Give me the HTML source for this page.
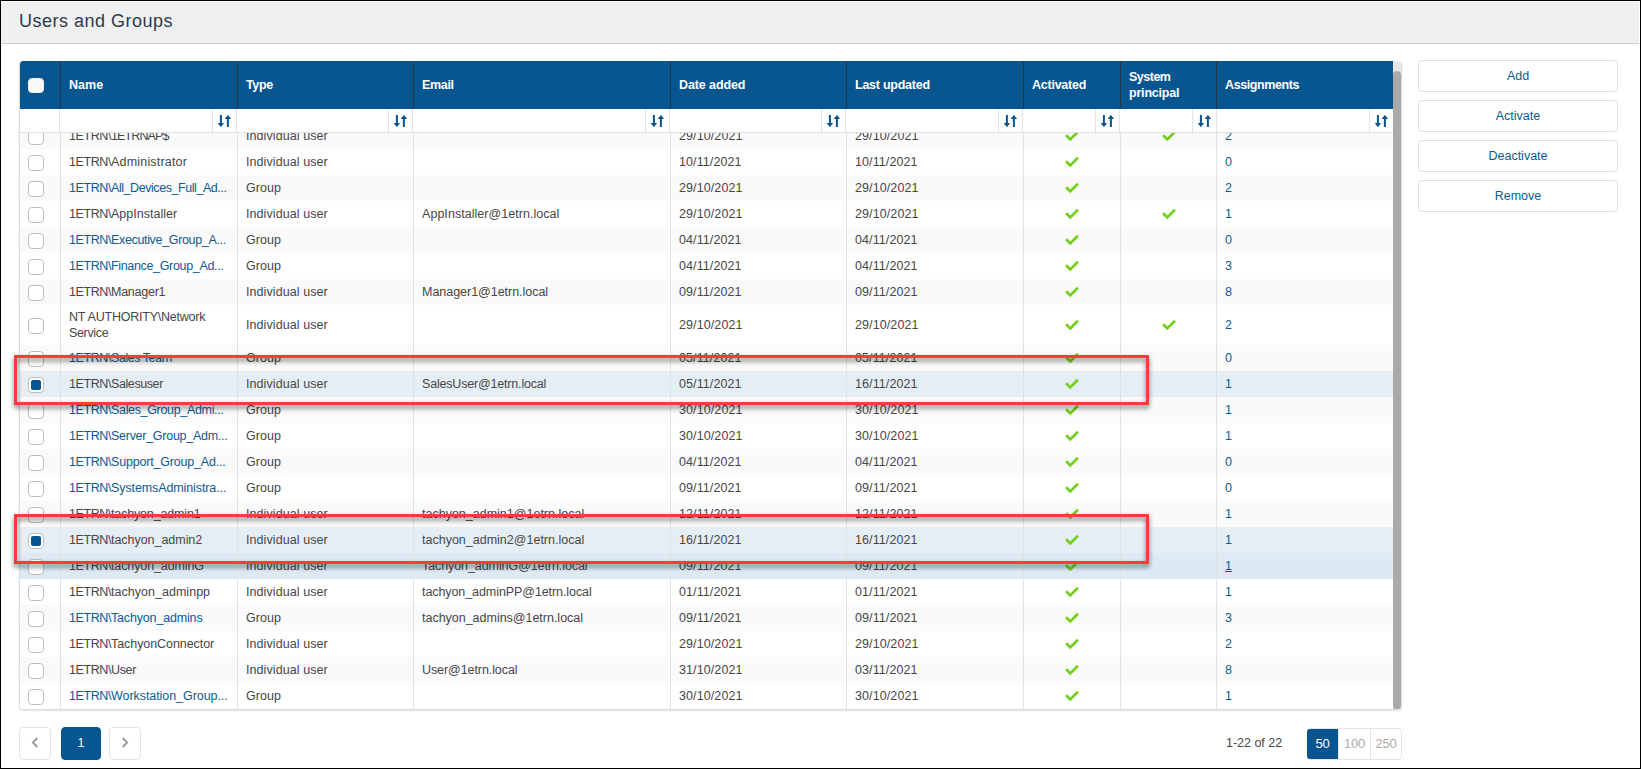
<!DOCTYPE html>
<html lang="en"><head><meta charset="utf-8"><title>Users and Groups</title>
<style>
*{box-sizing:border-box;margin:0;padding:0}
html,body{width:1641px;height:769px;overflow:hidden;background:#fff}
body{font-family:"Liberation Sans",Arial,sans-serif;font-size:12.5px;color:#464646}
.frame{position:absolute;left:0;top:0;width:1641px;height:769px;overflow:hidden;background:#fff}
.edge{left:0;top:0;width:1641px;height:769px;border:1px solid #000;z-index:9}
.frame>*{position:absolute}
.topbar{left:0;top:1px;width:1639px;height:43px;background:#f0f0f0;border-top:1px solid #fcfcfc;border-bottom:1px solid #cfcfcf}
.topbar h1{position:absolute;left:19px;top:8px;font-size:18px;font-weight:normal;color:#2b3b4e;line-height:22px;letter-spacing:.5px}
.grid{left:19px;top:61px;width:1383px;height:649px;border:1px solid #ddd;border-top:0;border-radius:4px;overflow:hidden;box-shadow:0 1px 2px rgba(0,0,0,.12)}
.grid>*{position:absolute}
.hdr{left:0;top:0;width:1373px;height:48px;background:#07568f;color:#fff;font-weight:bold}
.c{position:absolute;top:0;height:100%}
.c0{left:0;width:40px}
.c1{left:40px;width:177px}
.c2{left:217px;width:176px}
.c3{left:393px;width:257px}
.c4{left:650px;width:176px}
.c5{left:826px;width:177px}
.c6{left:1003px;width:97px}
.c7{left:1100px;width:97px}
.c8{left:1196px;width:177px}
.flt .c8{left:1197px;width:176px}
.hdr .c{border-left:1px solid #253746;display:flex;align-items:center;padding-left:8px;line-height:16px;font-size:12.5px}
.hdr .c0{border-left:0;padding:0}
.flt{left:-1px;top:48px;width:1374px;height:24px;background:#fff;border-bottom:1px solid #e2e2e2}
.flt .c{border-left:1px solid #e2e2e2}
.flt .c0{border-left:0}
.sb{position:absolute;right:0;top:0;width:24px;height:23px;border-left:1px solid #e2e2e2}
.c8 .sb{right:-1px}
.so{position:absolute;left:4.6px;top:6px;overflow:visible}
.body{left:0;top:72px;width:1373px;height:576px;overflow:hidden}
.rows{position:absolute;left:0;top:-10px;width:1373px}
.row{position:relative;height:26px;width:1373px;background:#fff}
.row.odd{background:#fafafa}
.row.tall{height:40px}
.row.sel{background:#e6eef5}
.row.hov{background:#dde9f3}
.row .c{border-left:1px solid #e2e2e2;white-space:nowrap;overflow:hidden}
.row .c0{border-left:0}
.t{position:absolute;left:8px;top:5px;line-height:16.5px;letter-spacing:0}
.tall .t{top:4px}
.tall .c1 .t{line-height:16px;top:4px}
.c1 .t,.c3 .t,.c4 .t,.c5 .t,.c8 .t{left:8px}
.c4 .t,.c5 .t{letter-spacing:.1px}
.c2 .t{letter-spacing:.08px}
.tall .c2 .t,.tall .c4 .t,.tall .c5 .t,.tall .c8 .t{top:12px}
a{color:#0f5a91;text-decoration:none}
.hov .c8 a{text-decoration:underline}
.cb{position:absolute;left:8px;top:6px;width:16px;height:16px;border:1px solid #bdbdbd;border-radius:4px;background:#fff}
.tall .cb{top:13px}
.hcb{top:17px;height:15px;border-color:#f3efe9;background:#fafafa}
.cb.on i{position:absolute;left:2px;top:2px;width:10px;height:10px;border-radius:2px;background:#07568f}
.ck{position:absolute;left:41px;top:7px}
.tall .ck{top:14px}
.sbar{left:1373px;top:0;width:8px;height:649px;background:#e7e7e7}
.thumb{position:absolute;left:0;top:10px;width:8px;height:639px;background:#aaa;border-radius:4px}
.btns{left:1418px;top:60px;width:200px}
.btn{width:200px;height:32px;margin-bottom:8px;border:1px solid #e0e0e0;border-radius:4px;text-align:center;line-height:30px;color:#0f5a91;background:#fff}
.pg{top:727px;height:33px;padding-bottom:2px;border:1px solid #e3e3e3;border-radius:4px;background:#fff;display:flex;align-items:center;justify-content:center}
.pprev{left:19px;width:32px}
.pcur{left:61px;width:40px;background:#07568f;border-color:#07568f;color:#fff}
.pnext{left:109px;width:32px}
.cnt{left:1226px;top:735px;line-height:16px;letter-spacing:-.02px}
.psz{left:1307px;top:728px;width:95px;height:32px;border:1px solid #e3e3e3;border-radius:4px;display:flex;font-size:13px;letter-spacing:-.3px}
.psz .p{width:32px;text-align:center;line-height:29px;color:#aaa;border-left:1px solid #e3e3e3}
.psz .p:last-child{width:31px}
.psz .p.on{width:31px;margin-left:-1px;background:#07568f;color:#fff;border-left:0;border-radius:3px 0 0 3px}
.redbox{left:14px;width:1135px;height:50px;border:3px solid #fc3a3a;filter:drop-shadow(0 3px 2.5px rgba(0,0,0,.55))}
.rb1{top:355px}
.rb2{top:514px}

</style></head><body>
<div class="frame">
<div class="topbar"><h1>Users and Groups</h1></div>
<div class="grid">
<div class="hdr"><div class="c c0"><span class="cb hcb"></span></div><div class="c c1"><span><span style="letter-spacing:0.038px">Name</span></span></div><div class="c c2"><span><span style="letter-spacing:-0.362px">Type</span></span></div><div class="c c3"><span><span style="letter-spacing:-0.332px">Email</span></span></div><div class="c c4"><span><span style="letter-spacing:-0.099px">Date added</span></span></div><div class="c c5"><span><span style="letter-spacing:-0.250px">Last updated</span></span></div><div class="c c6"><span><span style="letter-spacing:-0.242px">Activated</span></span></div><div class="c c7"><span><span style="letter-spacing:-0.497px">System</span><br><span style="letter-spacing:-0.199px">principal</span></span></div><div class="c c8"><span><span style="letter-spacing:-0.400px">Assignments</span></span></div></div>
<div class="flt"><div class="c c0"></div><div class="c c1"><div class="sb"><svg class="so" width="13" height="12" viewBox="0 0 13 12"><path d="M1.9 0H3.9V7.9H5.6Q6.1 7.9 5.8 8.4L3.2 11.8Q2.9 12.2 2.6 11.8L0 8.4Q-0.3 7.9 0.2 7.9H1.9Z M8.9 12H10.9V4.1H12.6Q13.1 4.1 12.8 3.6L10.2 0.2Q9.9 -0.2 9.6 0.2L7 3.6Q6.7 4.1 7.2 4.1H8.9Z" fill="#07568f"/></svg></div></div><div class="c c2"><div class="sb"><svg class="so" width="13" height="12" viewBox="0 0 13 12"><path d="M1.9 0H3.9V7.9H5.6Q6.1 7.9 5.8 8.4L3.2 11.8Q2.9 12.2 2.6 11.8L0 8.4Q-0.3 7.9 0.2 7.9H1.9Z M8.9 12H10.9V4.1H12.6Q13.1 4.1 12.8 3.6L10.2 0.2Q9.9 -0.2 9.6 0.2L7 3.6Q6.7 4.1 7.2 4.1H8.9Z" fill="#07568f"/></svg></div></div><div class="c c3"><div class="sb"><svg class="so" width="13" height="12" viewBox="0 0 13 12"><path d="M1.9 0H3.9V7.9H5.6Q6.1 7.9 5.8 8.4L3.2 11.8Q2.9 12.2 2.6 11.8L0 8.4Q-0.3 7.9 0.2 7.9H1.9Z M8.9 12H10.9V4.1H12.6Q13.1 4.1 12.8 3.6L10.2 0.2Q9.9 -0.2 9.6 0.2L7 3.6Q6.7 4.1 7.2 4.1H8.9Z" fill="#07568f"/></svg></div></div><div class="c c4"><div class="sb"><svg class="so" width="13" height="12" viewBox="0 0 13 12"><path d="M1.9 0H3.9V7.9H5.6Q6.1 7.9 5.8 8.4L3.2 11.8Q2.9 12.2 2.6 11.8L0 8.4Q-0.3 7.9 0.2 7.9H1.9Z M8.9 12H10.9V4.1H12.6Q13.1 4.1 12.8 3.6L10.2 0.2Q9.9 -0.2 9.6 0.2L7 3.6Q6.7 4.1 7.2 4.1H8.9Z" fill="#07568f"/></svg></div></div><div class="c c5"><div class="sb"><svg class="so" width="13" height="12" viewBox="0 0 13 12"><path d="M1.9 0H3.9V7.9H5.6Q6.1 7.9 5.8 8.4L3.2 11.8Q2.9 12.2 2.6 11.8L0 8.4Q-0.3 7.9 0.2 7.9H1.9Z M8.9 12H10.9V4.1H12.6Q13.1 4.1 12.8 3.6L10.2 0.2Q9.9 -0.2 9.6 0.2L7 3.6Q6.7 4.1 7.2 4.1H8.9Z" fill="#07568f"/></svg></div></div><div class="c c6"><div class="sb"><svg class="so" width="13" height="12" viewBox="0 0 13 12"><path d="M1.9 0H3.9V7.9H5.6Q6.1 7.9 5.8 8.4L3.2 11.8Q2.9 12.2 2.6 11.8L0 8.4Q-0.3 7.9 0.2 7.9H1.9Z M8.9 12H10.9V4.1H12.6Q13.1 4.1 12.8 3.6L10.2 0.2Q9.9 -0.2 9.6 0.2L7 3.6Q6.7 4.1 7.2 4.1H8.9Z" fill="#07568f"/></svg></div></div><div class="c c7"><div class="sb"><svg class="so" width="13" height="12" viewBox="0 0 13 12"><path d="M1.9 0H3.9V7.9H5.6Q6.1 7.9 5.8 8.4L3.2 11.8Q2.9 12.2 2.6 11.8L0 8.4Q-0.3 7.9 0.2 7.9H1.9Z M8.9 12H10.9V4.1H12.6Q13.1 4.1 12.8 3.6L10.2 0.2Q9.9 -0.2 9.6 0.2L7 3.6Q6.7 4.1 7.2 4.1H8.9Z" fill="#07568f"/></svg></div></div><div class="c c8"><div class="sb"><svg class="so" width="13" height="12" viewBox="0 0 13 12"><path d="M1.9 0H3.9V7.9H5.6Q6.1 7.9 5.8 8.4L3.2 11.8Q2.9 12.2 2.6 11.8L0 8.4Q-0.3 7.9 0.2 7.9H1.9Z M8.9 12H10.9V4.1H12.6Q13.1 4.1 12.8 3.6L10.2 0.2Q9.9 -0.2 9.6 0.2L7 3.6Q6.7 4.1 7.2 4.1H8.9Z" fill="#07568f"/></svg></div></div></div>
<div class="body"><div class="rows">
<div class="row odd"><div class="c c0"><span class="cb"></span></div><div class="c c1"><span class="t"><span style="letter-spacing:-0.409px">1ETRN\</span><span style="letter-spacing:-0.889px">1ETRNAP$</span></span></div><div class="c c2"><span class="t">Individual user</span></div><div class="c c3"><span class="t"></span></div><div class="c c4"><span class="t">29/10/2021</span></div><div class="c c5"><span class="t">29/10/2021</span></div><div class="c c6"><svg class="ck" width="16" height="13" viewBox="0 0 16 13"><path d="M1.1 5.2 L5.3 9.4 L12.9 1.8" fill="none" stroke="#72cf1a" stroke-width="2.7"/></svg></div><div class="c c7"><svg class="ck" width="16" height="13" viewBox="0 0 16 13"><path d="M1.1 5.2 L5.3 9.4 L12.9 1.8" fill="none" stroke="#72cf1a" stroke-width="2.7"/></svg></div><div class="c c8"><span class="t"><a>2</a></span></div></div>
<div class="row even"><div class="c c0"><span class="cb"></span></div><div class="c c1"><span class="t"><span style="letter-spacing:-0.409px">1ETRN\</span><span style="letter-spacing:0.189px">Administrator</span></span></div><div class="c c2"><span class="t">Individual user</span></div><div class="c c3"><span class="t"></span></div><div class="c c4"><span class="t">10/11/2021</span></div><div class="c c5"><span class="t">10/11/2021</span></div><div class="c c6"><svg class="ck" width="16" height="13" viewBox="0 0 16 13"><path d="M1.1 5.2 L5.3 9.4 L12.9 1.8" fill="none" stroke="#72cf1a" stroke-width="2.7"/></svg></div><div class="c c7"></div><div class="c c8"><span class="t"><a>0</a></span></div></div>
<div class="row odd"><div class="c c0"><span class="cb"></span></div><div class="c c1"><span class="t"><a><span style="letter-spacing:-0.409px">1ETRN\</span><span style="letter-spacing:-0.435px">All_Devices_Full_Ad...</span></a></span></div><div class="c c2"><span class="t">Group</span></div><div class="c c3"><span class="t"></span></div><div class="c c4"><span class="t">29/10/2021</span></div><div class="c c5"><span class="t">29/10/2021</span></div><div class="c c6"><svg class="ck" width="16" height="13" viewBox="0 0 16 13"><path d="M1.1 5.2 L5.3 9.4 L12.9 1.8" fill="none" stroke="#72cf1a" stroke-width="2.7"/></svg></div><div class="c c7"></div><div class="c c8"><span class="t"><a>2</a></span></div></div>
<div class="row even"><div class="c c0"><span class="cb"></span></div><div class="c c1"><span class="t"><span style="letter-spacing:-0.409px">1ETRN\</span><span style="letter-spacing:0.007px">AppInstaller</span></span></div><div class="c c2"><span class="t">Individual user</span></div><div class="c c3"><span class="t"><span style="letter-spacing:0.043px">AppInstaller@1etrn.local</span></span></div><div class="c c4"><span class="t">29/10/2021</span></div><div class="c c5"><span class="t">29/10/2021</span></div><div class="c c6"><svg class="ck" width="16" height="13" viewBox="0 0 16 13"><path d="M1.1 5.2 L5.3 9.4 L12.9 1.8" fill="none" stroke="#72cf1a" stroke-width="2.7"/></svg></div><div class="c c7"><svg class="ck" width="16" height="13" viewBox="0 0 16 13"><path d="M1.1 5.2 L5.3 9.4 L12.9 1.8" fill="none" stroke="#72cf1a" stroke-width="2.7"/></svg></div><div class="c c8"><span class="t"><a>1</a></span></div></div>
<div class="row odd"><div class="c c0"><span class="cb"></span></div><div class="c c1"><span class="t"><a><span style="letter-spacing:-0.409px">1ETRN\</span><span style="letter-spacing:-0.340px">Executive_Group_A...</span></a></span></div><div class="c c2"><span class="t">Group</span></div><div class="c c3"><span class="t"></span></div><div class="c c4"><span class="t">04/11/2021</span></div><div class="c c5"><span class="t">04/11/2021</span></div><div class="c c6"><svg class="ck" width="16" height="13" viewBox="0 0 16 13"><path d="M1.1 5.2 L5.3 9.4 L12.9 1.8" fill="none" stroke="#72cf1a" stroke-width="2.7"/></svg></div><div class="c c7"></div><div class="c c8"><span class="t"><a>0</a></span></div></div>
<div class="row even"><div class="c c0"><span class="cb"></span></div><div class="c c1"><span class="t"><a><span style="letter-spacing:-0.409px">1ETRN\</span><span style="letter-spacing:-0.338px">Finance_Group_Ad...</span></a></span></div><div class="c c2"><span class="t">Group</span></div><div class="c c3"><span class="t"></span></div><div class="c c4"><span class="t">04/11/2021</span></div><div class="c c5"><span class="t">04/11/2021</span></div><div class="c c6"><svg class="ck" width="16" height="13" viewBox="0 0 16 13"><path d="M1.1 5.2 L5.3 9.4 L12.9 1.8" fill="none" stroke="#72cf1a" stroke-width="2.7"/></svg></div><div class="c c7"></div><div class="c c8"><span class="t"><a>3</a></span></div></div>
<div class="row odd"><div class="c c0"><span class="cb"></span></div><div class="c c1"><span class="t"><span style="letter-spacing:-0.409px">1ETRN\</span><span style="letter-spacing:-0.250px">Manager1</span></span></div><div class="c c2"><span class="t">Individual user</span></div><div class="c c3"><span class="t"><span style="letter-spacing:-0.028px">Manager1@1etrn.local</span></span></div><div class="c c4"><span class="t">09/11/2021</span></div><div class="c c5"><span class="t">09/11/2021</span></div><div class="c c6"><svg class="ck" width="16" height="13" viewBox="0 0 16 13"><path d="M1.1 5.2 L5.3 9.4 L12.9 1.8" fill="none" stroke="#72cf1a" stroke-width="2.7"/></svg></div><div class="c c7"></div><div class="c c8"><span class="t"><a>8</a></span></div></div>
<div class="row even tall"><div class="c c0"><span class="cb"></span></div><div class="c c1"><span class="t"><span style="letter-spacing:-0.223px">NT AUTHORITY\Network</span><br><span style="letter-spacing:-0.341px">Service</span></span></div><div class="c c2"><span class="t">Individual user</span></div><div class="c c3"><span class="t"></span></div><div class="c c4"><span class="t">29/10/2021</span></div><div class="c c5"><span class="t">29/10/2021</span></div><div class="c c6"><svg class="ck" width="16" height="13" viewBox="0 0 16 13"><path d="M1.1 5.2 L5.3 9.4 L12.9 1.8" fill="none" stroke="#72cf1a" stroke-width="2.7"/></svg></div><div class="c c7"><svg class="ck" width="16" height="13" viewBox="0 0 16 13"><path d="M1.1 5.2 L5.3 9.4 L12.9 1.8" fill="none" stroke="#72cf1a" stroke-width="2.7"/></svg></div><div class="c c8"><span class="t"><a>2</a></span></div></div>
<div class="row odd"><div class="c c0"><span class="cb"></span></div><div class="c c1"><span class="t"><a><span style="letter-spacing:-0.409px">1ETRN\</span><span style="letter-spacing:-0.449px">Sales Team</span></a></span></div><div class="c c2"><span class="t">Group</span></div><div class="c c3"><span class="t"></span></div><div class="c c4"><span class="t">05/11/2021</span></div><div class="c c5"><span class="t">05/11/2021</span></div><div class="c c6"><svg class="ck" width="16" height="13" viewBox="0 0 16 13"><path d="M1.1 5.2 L5.3 9.4 L12.9 1.8" fill="none" stroke="#72cf1a" stroke-width="2.7"/></svg></div><div class="c c7"></div><div class="c c8"><span class="t"><a>0</a></span></div></div>
<div class="row even sel"><div class="c c0"><span class="cb on"><i></i></span></div><div class="c c1"><span class="t"><span style="letter-spacing:-0.409px">1ETRN\</span><span style="letter-spacing:-0.410px">Salesuser</span></span></div><div class="c c2"><span class="t">Individual user</span></div><div class="c c3"><span class="t"><span style="letter-spacing:-0.182px">SalesUser@1etrn.local</span></span></div><div class="c c4"><span class="t">05/11/2021</span></div><div class="c c5"><span class="t">16/11/2021</span></div><div class="c c6"><svg class="ck" width="16" height="13" viewBox="0 0 16 13"><path d="M1.1 5.2 L5.3 9.4 L12.9 1.8" fill="none" stroke="#72cf1a" stroke-width="2.7"/></svg></div><div class="c c7"></div><div class="c c8"><span class="t"><a>1</a></span></div></div>
<div class="row odd"><div class="c c0"><span class="cb"></span></div><div class="c c1"><span class="t"><a><span style="letter-spacing:-0.409px">1ETRN\</span><span style="letter-spacing:-0.332px">Sales_Group_Admi...</span></a></span></div><div class="c c2"><span class="t">Group</span></div><div class="c c3"><span class="t"></span></div><div class="c c4"><span class="t">30/10/2021</span></div><div class="c c5"><span class="t">30/10/2021</span></div><div class="c c6"><svg class="ck" width="16" height="13" viewBox="0 0 16 13"><path d="M1.1 5.2 L5.3 9.4 L12.9 1.8" fill="none" stroke="#72cf1a" stroke-width="2.7"/></svg></div><div class="c c7"></div><div class="c c8"><span class="t"><a>1</a></span></div></div>
<div class="row even"><div class="c c0"><span class="cb"></span></div><div class="c c1"><span class="t"><a><span style="letter-spacing:-0.409px">1ETRN\</span><span style="letter-spacing:-0.273px">Server_Group_Adm...</span></a></span></div><div class="c c2"><span class="t">Group</span></div><div class="c c3"><span class="t"></span></div><div class="c c4"><span class="t">30/10/2021</span></div><div class="c c5"><span class="t">30/10/2021</span></div><div class="c c6"><svg class="ck" width="16" height="13" viewBox="0 0 16 13"><path d="M1.1 5.2 L5.3 9.4 L12.9 1.8" fill="none" stroke="#72cf1a" stroke-width="2.7"/></svg></div><div class="c c7"></div><div class="c c8"><span class="t"><a>1</a></span></div></div>
<div class="row odd"><div class="c c0"><span class="cb"></span></div><div class="c c1"><span class="t"><a><span style="letter-spacing:-0.409px">1ETRN\</span><span style="letter-spacing:-0.186px">Support_Group_Ad...</span></a></span></div><div class="c c2"><span class="t">Group</span></div><div class="c c3"><span class="t"></span></div><div class="c c4"><span class="t">04/11/2021</span></div><div class="c c5"><span class="t">04/11/2021</span></div><div class="c c6"><svg class="ck" width="16" height="13" viewBox="0 0 16 13"><path d="M1.1 5.2 L5.3 9.4 L12.9 1.8" fill="none" stroke="#72cf1a" stroke-width="2.7"/></svg></div><div class="c c7"></div><div class="c c8"><span class="t"><a>0</a></span></div></div>
<div class="row even"><div class="c c0"><span class="cb"></span></div><div class="c c1"><span class="t"><a><span style="letter-spacing:-0.409px">1ETRN\</span><span style="letter-spacing:-0.105px">SystemsAdministra...</span></a></span></div><div class="c c2"><span class="t">Group</span></div><div class="c c3"><span class="t"></span></div><div class="c c4"><span class="t">09/11/2021</span></div><div class="c c5"><span class="t">09/11/2021</span></div><div class="c c6"><svg class="ck" width="16" height="13" viewBox="0 0 16 13"><path d="M1.1 5.2 L5.3 9.4 L12.9 1.8" fill="none" stroke="#72cf1a" stroke-width="2.7"/></svg></div><div class="c c7"></div><div class="c c8"><span class="t"><a>0</a></span></div></div>
<div class="row odd"><div class="c c0"><span class="cb"></span></div><div class="c c1"><span class="t"><span style="letter-spacing:-0.409px">1ETRN\</span><span style="letter-spacing:-0.160px">tachyon_admin1</span></span></div><div class="c c2"><span class="t">Individual user</span></div><div class="c c3"><span class="t"><span style="letter-spacing:0.004px">tachyon_admin1@1etrn.local</span></span></div><div class="c c4"><span class="t">12/11/2021</span></div><div class="c c5"><span class="t">12/11/2021</span></div><div class="c c6"><svg class="ck" width="16" height="13" viewBox="0 0 16 13"><path d="M1.1 5.2 L5.3 9.4 L12.9 1.8" fill="none" stroke="#72cf1a" stroke-width="2.7"/></svg></div><div class="c c7"></div><div class="c c8"><span class="t"><a>1</a></span></div></div>
<div class="row even sel"><div class="c c0"><span class="cb on"><i></i></span></div><div class="c c1"><span class="t"><span style="letter-spacing:-0.409px">1ETRN\</span><span style="letter-spacing:-0.038px">tachyon_admin2</span></span></div><div class="c c2"><span class="t">Individual user</span></div><div class="c c3"><span class="t"><span style="letter-spacing:0.004px">tachyon_admin2@1etrn.local</span></span></div><div class="c c4"><span class="t">16/11/2021</span></div><div class="c c5"><span class="t">16/11/2021</span></div><div class="c c6"><svg class="ck" width="16" height="13" viewBox="0 0 16 13"><path d="M1.1 5.2 L5.3 9.4 L12.9 1.8" fill="none" stroke="#72cf1a" stroke-width="2.7"/></svg></div><div class="c c7"></div><div class="c c8"><span class="t"><a>1</a></span></div></div>
<div class="row odd hov"><div class="c c0"><span class="cb"></span></div><div class="c c1"><span class="t"><span style="letter-spacing:-0.409px">1ETRN\</span><span style="letter-spacing:-0.108px">tachyon_adminG</span></span></div><div class="c c2"><span class="t">Individual user</span></div><div class="c c3"><span class="t"><span style="letter-spacing:-0.082px">Tachyon_adminG@1etrn.local</span></span></div><div class="c c4"><span class="t">09/11/2021</span></div><div class="c c5"><span class="t">09/11/2021</span></div><div class="c c6"><svg class="ck" width="16" height="13" viewBox="0 0 16 13"><path d="M1.1 5.2 L5.3 9.4 L12.9 1.8" fill="none" stroke="#72cf1a" stroke-width="2.7"/></svg></div><div class="c c7"></div><div class="c c8"><span class="t"><a>1</a></span></div></div>
<div class="row even"><div class="c c0"><span class="cb"></span></div><div class="c c1"><span class="t"><span style="letter-spacing:-0.409px">1ETRN\</span><span style="letter-spacing:0.027px">tachyon_adminpp</span></span></div><div class="c c2"><span class="t">Individual user</span></div><div class="c c3"><span class="t"><span style="letter-spacing:-0.079px">tachyon_adminPP@1etrn.local</span></span></div><div class="c c4"><span class="t">01/11/2021</span></div><div class="c c5"><span class="t">01/11/2021</span></div><div class="c c6"><svg class="ck" width="16" height="13" viewBox="0 0 16 13"><path d="M1.1 5.2 L5.3 9.4 L12.9 1.8" fill="none" stroke="#72cf1a" stroke-width="2.7"/></svg></div><div class="c c7"></div><div class="c c8"><span class="t"><a>1</a></span></div></div>
<div class="row odd"><div class="c c0"><span class="cb"></span></div><div class="c c1"><span class="t"><a><span style="letter-spacing:-0.409px">1ETRN\</span><span style="letter-spacing:-0.165px">Tachyon_admins</span></a></span></div><div class="c c2"><span class="t">Group</span></div><div class="c c3"><span class="t"><span style="letter-spacing:-0.015px">tachyon_admins@1etrn.local</span></span></div><div class="c c4"><span class="t">09/11/2021</span></div><div class="c c5"><span class="t">09/11/2021</span></div><div class="c c6"><svg class="ck" width="16" height="13" viewBox="0 0 16 13"><path d="M1.1 5.2 L5.3 9.4 L12.9 1.8" fill="none" stroke="#72cf1a" stroke-width="2.7"/></svg></div><div class="c c7"></div><div class="c c8"><span class="t"><a>3</a></span></div></div>
<div class="row even"><div class="c c0"><span class="cb"></span></div><div class="c c1"><span class="t"><span style="letter-spacing:-0.409px">1ETRN\</span><span style="letter-spacing:-0.065px">TachyonConnector</span></span></div><div class="c c2"><span class="t">Individual user</span></div><div class="c c3"><span class="t"></span></div><div class="c c4"><span class="t">29/10/2021</span></div><div class="c c5"><span class="t">29/10/2021</span></div><div class="c c6"><svg class="ck" width="16" height="13" viewBox="0 0 16 13"><path d="M1.1 5.2 L5.3 9.4 L12.9 1.8" fill="none" stroke="#72cf1a" stroke-width="2.7"/></svg></div><div class="c c7"></div><div class="c c8"><span class="t"><a>2</a></span></div></div>
<div class="row odd"><div class="c c0"><span class="cb"></span></div><div class="c c1"><span class="t"><span style="letter-spacing:-0.409px">1ETRN\</span><span style="letter-spacing:-0.352px">User</span></span></div><div class="c c2"><span class="t">Individual user</span></div><div class="c c3"><span class="t"><span style="letter-spacing:-0.079px">User@1etrn.local</span></span></div><div class="c c4"><span class="t">31/10/2021</span></div><div class="c c5"><span class="t">03/11/2021</span></div><div class="c c6"><svg class="ck" width="16" height="13" viewBox="0 0 16 13"><path d="M1.1 5.2 L5.3 9.4 L12.9 1.8" fill="none" stroke="#72cf1a" stroke-width="2.7"/></svg></div><div class="c c7"></div><div class="c c8"><span class="t"><a>8</a></span></div></div>
<div class="row even"><div class="c c0"><span class="cb"></span></div><div class="c c1"><span class="t"><a><span style="letter-spacing:-0.409px">1ETRN\</span><span style="letter-spacing:-0.060px">Workstation_Group...</span></a></span></div><div class="c c2"><span class="t">Group</span></div><div class="c c3"><span class="t"></span></div><div class="c c4"><span class="t">30/10/2021</span></div><div class="c c5"><span class="t">30/10/2021</span></div><div class="c c6"><svg class="ck" width="16" height="13" viewBox="0 0 16 13"><path d="M1.1 5.2 L5.3 9.4 L12.9 1.8" fill="none" stroke="#72cf1a" stroke-width="2.7"/></svg></div><div class="c c7"></div><div class="c c8"><span class="t"><a>1</a></span></div></div>
</div></div>
<div class="sbar"><div class="thumb"></div></div>
</div>
<div class="btns"><div class="btn">Add</div><div class="btn">Activate</div><div class="btn">Deactivate</div><div class="btn">Remove</div></div>
<div class="pg pprev"><svg width="8" height="11" viewBox="0 0 8 11"><path d="M6.3 1 L1.9 5.5 L6.3 10" fill="none" stroke="#999" stroke-width="1.9"/></svg></div><div class="pg pcur">1</div><div class="pg pnext"><svg width="8" height="11" viewBox="0 0 8 11"><path d="M1.7 1 L6.1 5.5 L1.7 10" fill="none" stroke="#999" stroke-width="1.9"/></svg></div>
<div class="cnt">1-22 of 22</div>
<div class="psz"><div class="p on">50</div><div class="p">100</div><div class="p">250</div></div>
<div class="redbox rb1"></div><div class="redbox rb2"></div>
<div class="edge"></div>
</div>
</body></html>
